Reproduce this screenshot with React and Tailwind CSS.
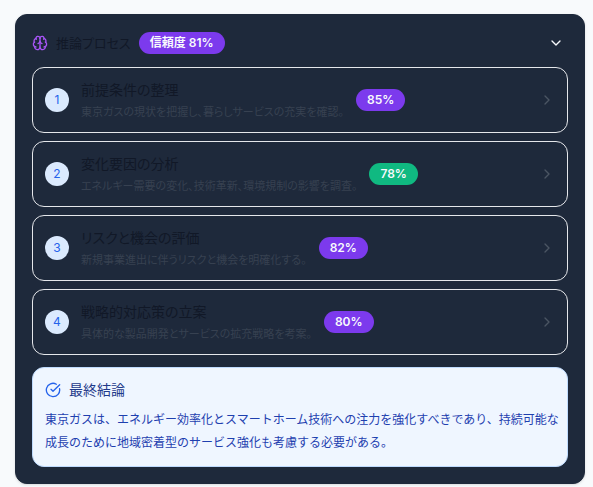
import { useState } from "react";
import { Brain, ChevronDown, ChevronRight, CircleCheckBig } from "lucide-react";

const steps = [
  { title: "前提条件の整理", detail: "東京ガスの現状を把握し、暮らしサービスの充実を確認。", score: 85, tone: "bg-[#7c3aed]" },
  { title: "変化要因の分析", detail: "エネルギー需要の変化、技術革新、環境規制の影響を調査。", score: 78, tone: "bg-[#10b981]" },
  { title: "リスクと機会の評価", detail: "新規事業進出に伴うリスクと機会を明確化する。", score: 82, tone: "bg-[#7c3aed]" },
  { title: "戦略的対応策の立案", detail: "具体的な製品開発とサービスの拡充戦略を考案。", score: 80, tone: "bg-[#7c3aed]" },
];

function Badge({ tone, children }) {
  return (
    <span className={`shrink-0 whitespace-nowrap rounded-full border border-transparent bg-origin-border px-2.5 py-0.5 text-xs font-semibold text-slate-50 ${tone}`}>
      {children}
    </span>
  );
}

function Step({ index, step }) {
  return (
    <li>
      <button type="button" className="flex w-full items-center gap-3 rounded-xl border border-gray-200 p-3 text-left">
        <span className="flex size-6 shrink-0 items-center justify-center rounded-full bg-[#dbeafe] text-xs text-[#2563eb]">
          {index}
        </span>
        <span className="flex min-w-0 flex-col gap-1">
          <span className="text-sm text-[#111827]">{step.title}</span>
          <span className="text-[11px] leading-4 text-[#374151]">{step.detail}</span>
        </span>
        <Badge tone={step.tone}>{step.score}%</Badge>
        <ChevronRight className="ml-auto size-4 shrink-0 text-[#4b5563]" aria-hidden="true" />
      </button>
    </li>
  );
}

export default function App() {
  const [open, setOpen] = useState(true);

  return (
    <main className="min-h-screen bg-[#f8fafc] pt-3.5 pr-2 pl-[15px] font-['Inter','Noto_Sans_CJK_JP',sans-serif] [font-feature-settings:'palt']">
      <section className="rounded-xl border border-[#1e293b] bg-[#1e293b] p-4 shadow-sm">
        <button
          type="button"
          aria-expanded={open}
          onClick={() => setOpen(!open)}
          className="flex h-6 w-full items-center gap-2"
        >
          <Brain className="size-4 shrink-0 text-[#a855f7]" aria-hidden="true" />
          <span className="text-[13px] leading-5 text-[#111827]">推論プロセス</span>
          <Badge tone="bg-[#7c3aed]">信頼度 81%</Badge>
          <ChevronDown className="mr-1 ml-auto size-4 shrink-0 text-slate-50" aria-hidden="true" />
        </button>

        {open && (
          <div className="mt-3 flex flex-col gap-3">
            <ol className="flex flex-col gap-2">
              {steps.map((step, i) => (
                <Step key={step.title} index={i + 1} step={step} />
              ))}
            </ol>
            <div className="rounded-xl border border-[#bfdbfe] bg-[#eff6ff] py-3 pr-1 pl-3">
              <div className="flex items-center gap-2">
                <CircleCheckBig className="size-4 shrink-0 text-[#2563eb]" aria-hidden="true" />
                <h2 className="text-sm text-[#1e3a8a]">最終結論</h2>
              </div>
              <p className="mt-2 text-xs leading-[23px] text-[#1e40af] [font-feature-settings:normal]">
                東京ガスは、エネルギー効率化とスマートホーム技術への注力を強化すべきであり、持続可能な成長のために地域密着型のサービス強化も考慮する必要がある。
              </p>
            </div>
          </div>
        )}
      </section>
    </main>
  );
}
